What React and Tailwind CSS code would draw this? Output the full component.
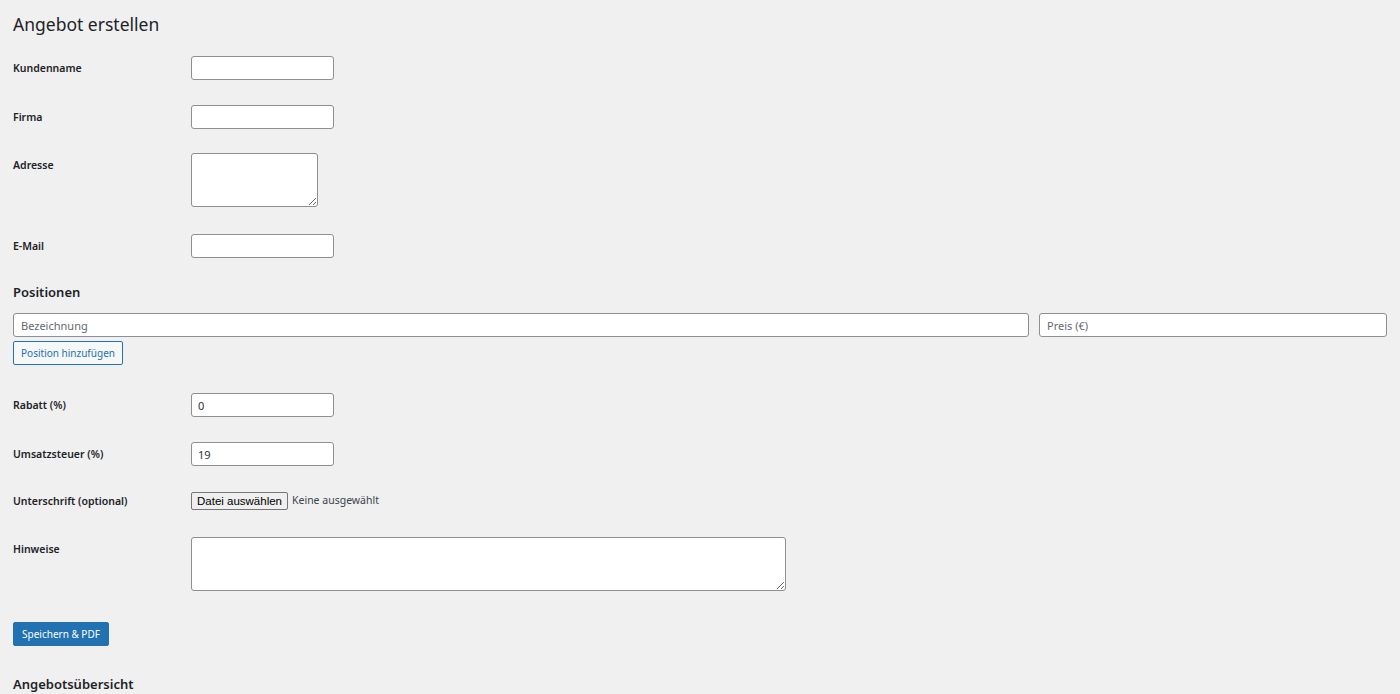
import { useState } from "react";

const inputCls =
  "h-[24px] w-[143px] rounded-[3px] border border-[#8c8f94] bg-white px-[6px] text-[11px] text-[#2c3338] outline-none placeholder:text-[#8c8f94]";

function Row({ label, className = "", children }) {
  return (
    <div className={`flex items-start ${className}`}>
      <label className="w-[178px] shrink-0 text-[10.5px] font-semibold leading-[24px] text-[#1d2327]">
        {label}
      </label>
      {children}
    </div>
  );
}

export default function App() {
  const [form, setForm] = useState({
    kunde: "",
    firma: "",
    adresse: "",
    email: "",
    bezeichnung: "",
    preis: "",
    rabatt: "0",
    ust: "19",
    hinweise: "",
  });

  const set = (k) => (e) => setForm({ ...form, [k]: e.target.value });

  return (
    <div
      className="min-h-screen bg-[#f0f0f1] px-[13px] text-[#1d2327]"
      style={{ fontFamily: '"Noto Sans", "Open Sans", sans-serif' }}
    >
      <h1 className="pt-[10px] text-[17.5px] font-normal leading-[28px]">Angebot erstellen</h1>

      <Row label="Kundenname" className="mt-[18px]">
        <input className={inputCls} value={form.kunde} onChange={set("kunde")} />
      </Row>

      <Row label="Firma" className="mt-[25px]">
        <input className={inputCls} value={form.firma} onChange={set("firma")} />
      </Row>

      <Row label="Adresse" className="mt-[24px]">
        <textarea
          className="block h-[54px] w-[127px] rounded-[3px] border border-[#8c8f94] bg-white px-[6px] text-[11px] outline-none"
          value={form.adresse}
          onChange={set("adresse")}
        />
      </Row>

      <Row label="E-Mail" className="mt-[27px]">
        <input className={inputCls} value={form.email} onChange={set("email")} />
      </Row>

      <h2 className="mt-[24px] text-[13px] font-semibold leading-[20px]">Positionen</h2>

      <div className="mt-[11px] grid grid-cols-[1fr_348px] gap-[10px]">
        <input
          className="h-[24px] rounded-[3px] border border-[#8c8f94] bg-white px-[7px] text-[11px] outline-none placeholder:text-[#646970]"
          placeholder="Bezeichnung"
          value={form.bezeichnung}
          onChange={set("bezeichnung")}
        />
        <input
          className="h-[24px] rounded-[3px] border border-[#8c8f94] bg-white px-[7px] text-[11px] outline-none placeholder:text-[#646970]"
          placeholder="Preis (€)"
          value={form.preis}
          onChange={set("preis")}
        />
      </div>

      <button className="mt-[4px] block h-[24px] w-[110px] rounded-[2px] border border-[#2271b1] bg-[#f6f7f7] text-[10px] leading-[22px] text-[#2271b1]">
        Position hinzufügen
      </button>

      <Row label="Rabatt (%)" className="mt-[28px]">
        <input className={inputCls} value={form.rabatt} onChange={set("rabatt")} />
      </Row>

      <Row label="Umsatzsteuer (%)" className="mt-[25px]">
        <input className={inputCls} value={form.ust} onChange={set("ust")} />
      </Row>

      <div className="mt-[25px] flex items-center">
        <label className="w-[178px] shrink-0 text-[10.5px] font-semibold leading-[20px]">
          Unterschrift (optional)
        </label>
        <div className="flex items-center gap-[4px]">
          <button
            className="h-[18px] w-[97px] rounded-[2px] border border-[#767676] bg-[#efefef] text-[11.5px] leading-[16px] text-black"
            style={{ fontFamily: '"Liberation Sans", Arial, sans-serif' }}
          >
            Datei auswählen
          </button>
          <span className="text-[10.5px] text-[#3c434a]">Keine ausgewählt</span>
        </div>
      </div>

      <Row label="Hinweise" className="mt-[26px]">
        <textarea
          className="block h-[54px] w-[595px] rounded-[3px] border border-[#8c8f94] bg-white px-[6px] text-[11px] outline-none"
          value={form.hinweise}
          onChange={set("hinweise")}
        />
      </Row>

      <button className="mt-[31px] block h-[24px] w-[96px] rounded-[2px] border border-[#2271b1] bg-[#2271b1] text-[10px] leading-[22px] text-white">
        Speichern &amp; PDF
      </button>

      <h2 className="mt-[28px] text-[13px] font-semibold leading-[20px]">Angebotsübersicht</h2>
    </div>
  );
}
